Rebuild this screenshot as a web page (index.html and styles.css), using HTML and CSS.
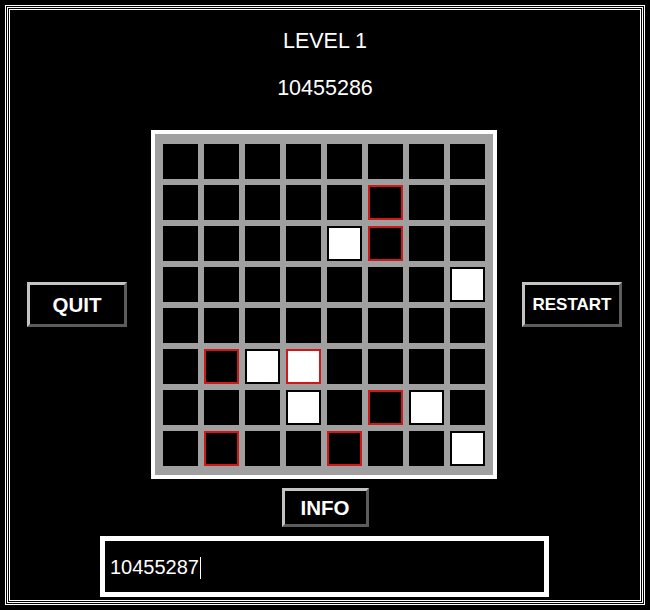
FILE: index.html
```html
<!DOCTYPE html>
<html>
<head>
<meta charset="utf-8">
<link rel="stylesheet" href="styles.css">
</head>
<body>
<div class="frame">
  <div class="title">LEVEL 1</div>
  <div class="score">10455286</div>
  <div class="row">
    <div class="btn btn-side">QUIT</div>
    <div class="board">
      <div class="cell"></div><div class="cell"></div><div class="cell"></div><div class="cell"></div><div class="cell"></div><div class="cell"></div><div class="cell"></div><div class="cell"></div>
      <div class="cell"></div><div class="cell"></div><div class="cell"></div><div class="cell"></div><div class="cell"></div><div class="cell red"></div><div class="cell"></div><div class="cell"></div>
      <div class="cell"></div><div class="cell"></div><div class="cell"></div><div class="cell"></div><div class="cell white"></div><div class="cell red"></div><div class="cell"></div><div class="cell"></div>
      <div class="cell"></div><div class="cell"></div><div class="cell"></div><div class="cell"></div><div class="cell"></div><div class="cell"></div><div class="cell"></div><div class="cell white"></div>
      <div class="cell"></div><div class="cell"></div><div class="cell"></div><div class="cell"></div><div class="cell"></div><div class="cell"></div><div class="cell"></div><div class="cell"></div>
      <div class="cell"></div><div class="cell red"></div><div class="cell white"></div><div class="cell white red"></div><div class="cell"></div><div class="cell"></div><div class="cell"></div><div class="cell"></div>
      <div class="cell"></div><div class="cell"></div><div class="cell"></div><div class="cell white"></div><div class="cell"></div><div class="cell red"></div><div class="cell white"></div><div class="cell"></div>
      <div class="cell"></div><div class="cell red"></div><div class="cell"></div><div class="cell"></div><div class="cell red"></div><div class="cell"></div><div class="cell"></div><div class="cell white"></div>
    </div>
    <div class="btn btn-side btn-small">RESTART</div>
  </div>
  <div class="btn btn-info">INFO</div>
  <div class="entry"><span class="entry-text">10455287</span><span class="caret"></span></div>
</div>
</body>
</html>
```
FILE: styles.css
```css
html, body {
  margin: 0;
  padding: 0;
  background: #000;
}
body {
  font-family: "Liberation Sans", Arial, sans-serif;
  color: #fff;
}
.frame {
  box-sizing: border-box;
  margin: 5px;
  width: 640px;
  height: 600px;
  border: 1px solid #fff;
  box-shadow: inset 0 0 0 1px #000, inset 0 0 0 2px #fff, inset 0 0 0 3px #000, inset 0 0 0 4px #fff;
  display: flex;
  flex-direction: column;
  align-items: center;
}
.title, .score {
  font-size: 21.5px;
  line-height: 23px;
  height: 23px;
}
.title { margin-top: 24px; }
.score { margin-top: 24px; }
.row {
  margin-top: 30px;
  align-self: stretch;
  display: flex;
  align-items: center;
  justify-content: flex-start;
  padding-left: 21px;
}
.btn {
  box-sizing: border-box;
  background: #000;
  border: 3px solid;
  border-color: #c4c4c4 #5c5c5c #5c5c5c #c4c4c4;
  display: flex;
  align-items: center;
  justify-content: center;
  font-weight: bold;
  font-size: 20.5px;
  color: #fff;
}
.btn-side {
  width: 100px;
  height: 45px;
}
.btn-small {
  font-size: 17px;
}
.btn-info {
  margin-top: 9px;
  width: 87px;
  height: 39px;
}
.board {
  box-sizing: border-box;
  width: 346px;
  height: 349px;
  margin: 0 25px 0 24px;
  border: 4px solid #fff;
  background: #a0a0a0;
  padding: 10px 8px 9px 8px;
  display: grid;
  grid-template-columns: repeat(8, 35px);
  grid-template-rows: repeat(8, 35px);
  gap: 6px;
}
.cell {
  box-sizing: border-box;
  background: #000;
  border: 2px solid #000;
}
.cell.white { background: #fff; }
.cell.red { border-color: #d01818; }
.entry {
  box-sizing: border-box;
  margin-top: 9px;
  width: 449px;
  height: 61px;
  border: 5px solid #fff;
  padding-left: 5px;
  padding-top: 2px;
  display: flex;
  align-items: center;
  align-self: flex-start;
  margin-left: 94px;
  font-size: 20px;
}
.caret {
  display: inline-block;
  width: 1px;
  height: 22px;
  background: #fff;
  margin-left: 1px;
}
```
